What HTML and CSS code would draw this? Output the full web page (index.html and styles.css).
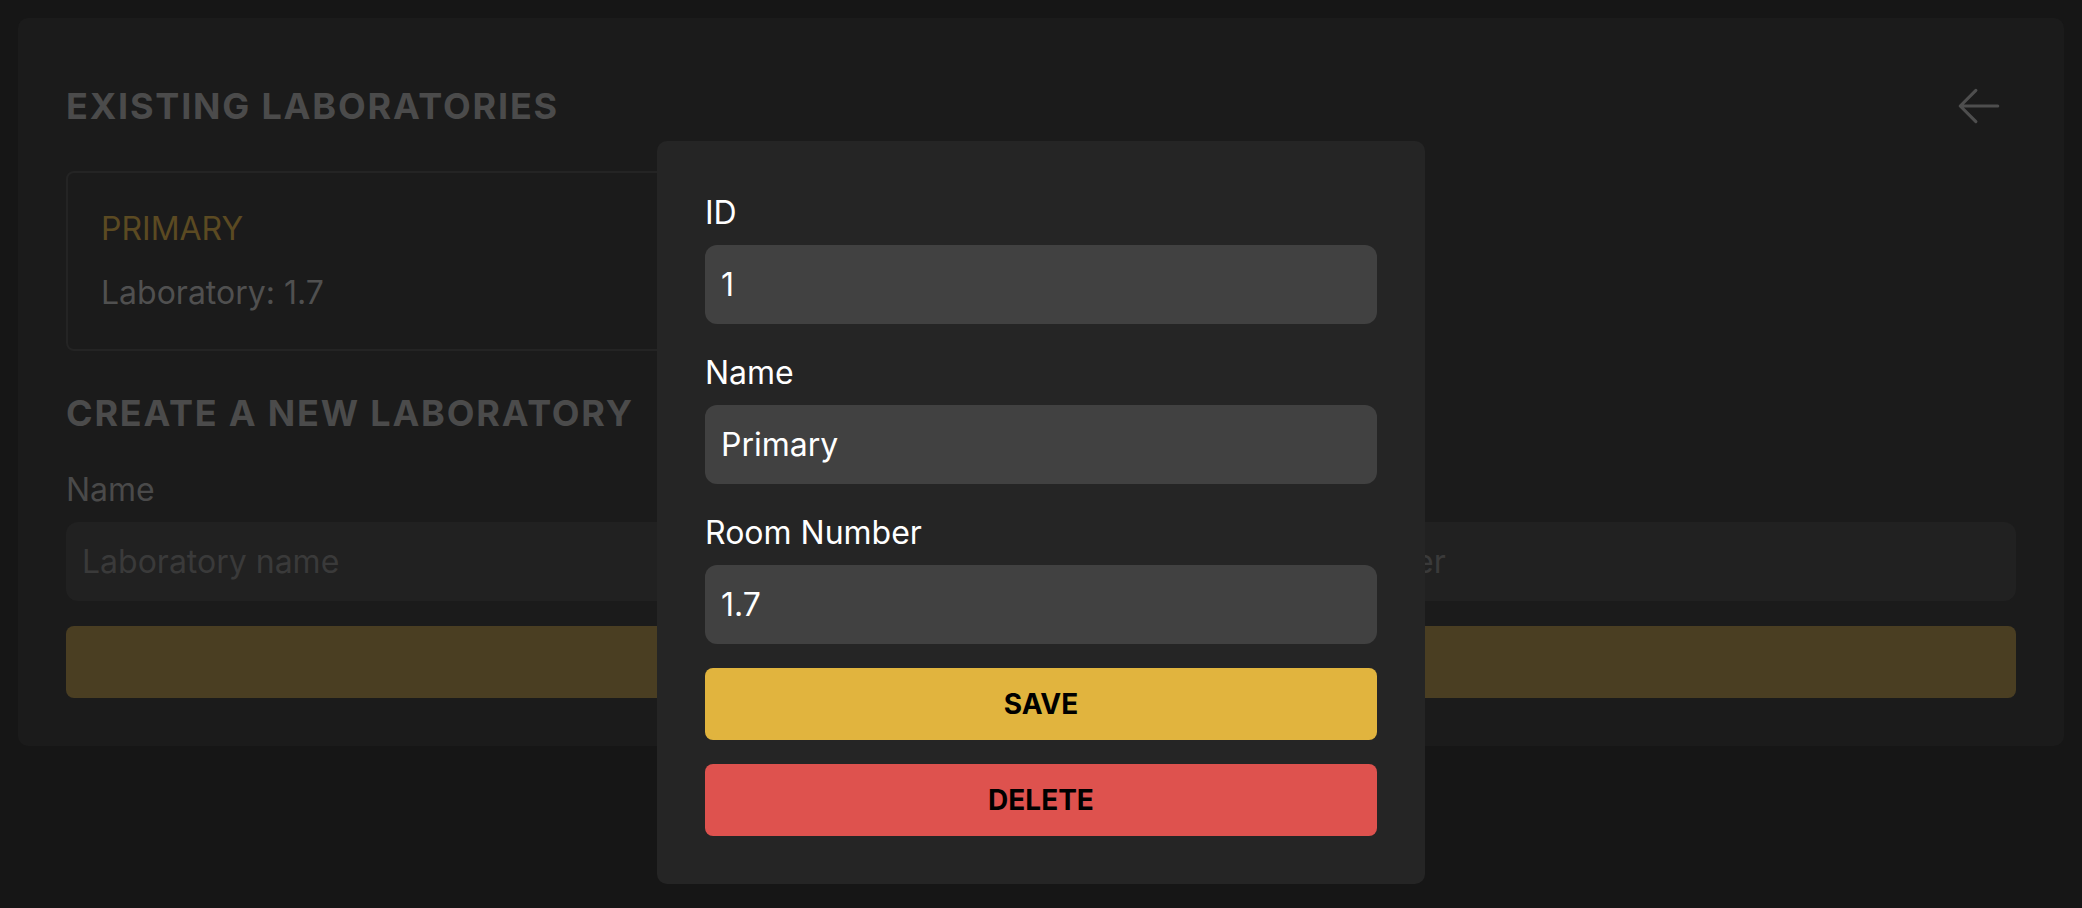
FILE: index.html
```html
<!DOCTYPE html>
<html lang="en">
<head>
<meta charset="utf-8">
<title>Laboratories</title>
<link rel="stylesheet" href="styles.css">
</head>
<body>
<main class="page">
  <section class="panel">
    <header class="panel-head">
      <h1 class="section-title">EXISTING LABORATORIES</h1>
      <button class="back-btn" type="button" aria-label="Back">
        <svg viewBox="0 0 24 24" fill="none" stroke="currentColor" stroke-width="1.5"><path stroke-linecap="round" stroke-linejoin="round" d="M10.5 19.5 3 12m0 0 7.5-7.5M3 12h18"/></svg>
      </button>
    </header>
    <div class="lab-grid">
      <article class="lab-card">
        <h2 class="lab-name">PRIMARY</h2>
        <p class="lab-room">Laboratory: 1.7</p>
      </article>
    </div>
    <h2 class="section-title create-title">CREATE A NEW LABORATORY</h2>
    <form class="create-form">
      <div class="form-row">
        <label class="field">
          <span class="field-label">Name</span>
          <input class="field-input" type="text" placeholder="Laboratory name">
        </label>
        <label class="field">
          <span class="field-label">Room Number</span>
          <input class="field-input" type="text" placeholder="Laboratory room number">
        </label>
      </div>
      <button class="btn btn-create" type="button">CREATE</button>
    </form>
  </section>
</main>

<div class="modal-overlay">
  <div class="modal">
    <div class="modal-fields">
      <label class="field">
        <span class="field-label">ID</span>
        <input class="field-input" type="text" value="1">
      </label>
      <label class="field">
        <span class="field-label">Name</span>
        <input class="field-input" type="text" value="Primary">
      </label>
      <label class="field">
        <span class="field-label">Room Number</span>
        <input class="field-input" type="text" value="1.7">
      </label>
    </div>
    <div class="modal-actions">
      <button class="btn btn-save" type="button">SAVE</button>
      <button class="btn btn-delete" type="button">DELETE</button>
    </div>
  </div>
</div>
</body>
</html>
```

FILE: styles.css
```css
* { box-sizing: border-box; }

html, body { margin: 0; }

body {
  background: #161616;
  font-family: Inter, "Noto Sans", sans-serif;
  padding: 18px;
  min-height: 100vh;
}

.panel {
  background: #1b1b1b;
  border-radius: 10px;
  padding: 48px;
}

.panel-head {
  display: flex;
  justify-content: space-between;
  align-items: center;
  height: 80px;
}

.section-title {
  margin: 0;
  font-size: 36px;
  line-height: 54px;
  font-weight: 700;
  letter-spacing: 0.05em;
  color: #4b4b4b;
}

.back-btn {
  background: none;
  border: 0;
  padding: 8px;
  margin-right: 4px;
  color: #4e4e4e;
  display: flex;
  cursor: pointer;
}

.back-btn svg {
  width: 50px;
  height: 50px;
  display: block;
}

.lab-grid {
  display: grid;
  grid-template-columns: repeat(3, 1fr);
  gap: 24px;
  margin-top: 25px;
}

.lab-card {
  border: 2px solid #242424;
  border-radius: 8px;
  padding: 32px 33px;
}

.lab-name {
  margin: 0;
  font-size: 32px;
  line-height: 48px;
  font-weight: 400;
  color: #5b4a22;
}

.lab-room {
  margin: 16px 0 0;
  font-size: 32px;
  line-height: 48px;
  color: #505050;
}

.create-title {
  margin-top: 35px;
}

.create-form {
  margin-top: 26px;
  display: flex;
  flex-direction: column;
  gap: 25px;
}

.form-row {
  display: grid;
  grid-template-columns: 1fr 1fr;
  gap: 24px;
}

.field {
  display: flex;
  flex-direction: column;
}

.field-label {
  font-size: 32px;
  line-height: 48px;
  margin-bottom: 8px;
  color: #4a4a4a;
}

.field-input {
  height: 79px;
  border: 0;
  border-radius: 12px;
  background: #212121;
  padding: 0 16px;
  font-family: inherit;
  font-size: 32px;
  color: #555555;
  outline: none;
  width: 100%;
}

.field-input::placeholder {
  color: #3a3a3a;
}

.btn {
  height: 72px;
  border: 0;
  border-radius: 8px;
  font-family: inherit;
  font-size: 28px;
  font-weight: 700;
  color: #000;
  width: 100%;
  cursor: pointer;
}

.btn-create {
  background: #4a3e22;
  color: #0c0a05;
}

.modal-overlay {
  position: fixed;
  inset: 0;
  display: flex;
  justify-content: center;
  align-items: flex-start;
  padding-top: 141px;
}

.modal {
  width: 768px;
  background: #252525;
  border-radius: 10px;
  padding: 48px;
  display: flex;
  flex-direction: column;
  gap: 24px;
}

.modal-fields {
  display: flex;
  flex-direction: column;
  gap: 25px;
}

.modal .field-label {
  color: #ffffff;
}

.modal .field-input {
  background: #414141;
  color: #ffffff;
}

.modal-actions {
  display: flex;
  flex-direction: column;
  gap: 24px;
}

.btn-save {
  background: #e1b43e;
}

.btn-delete {
  background: #de524e;
}
```
